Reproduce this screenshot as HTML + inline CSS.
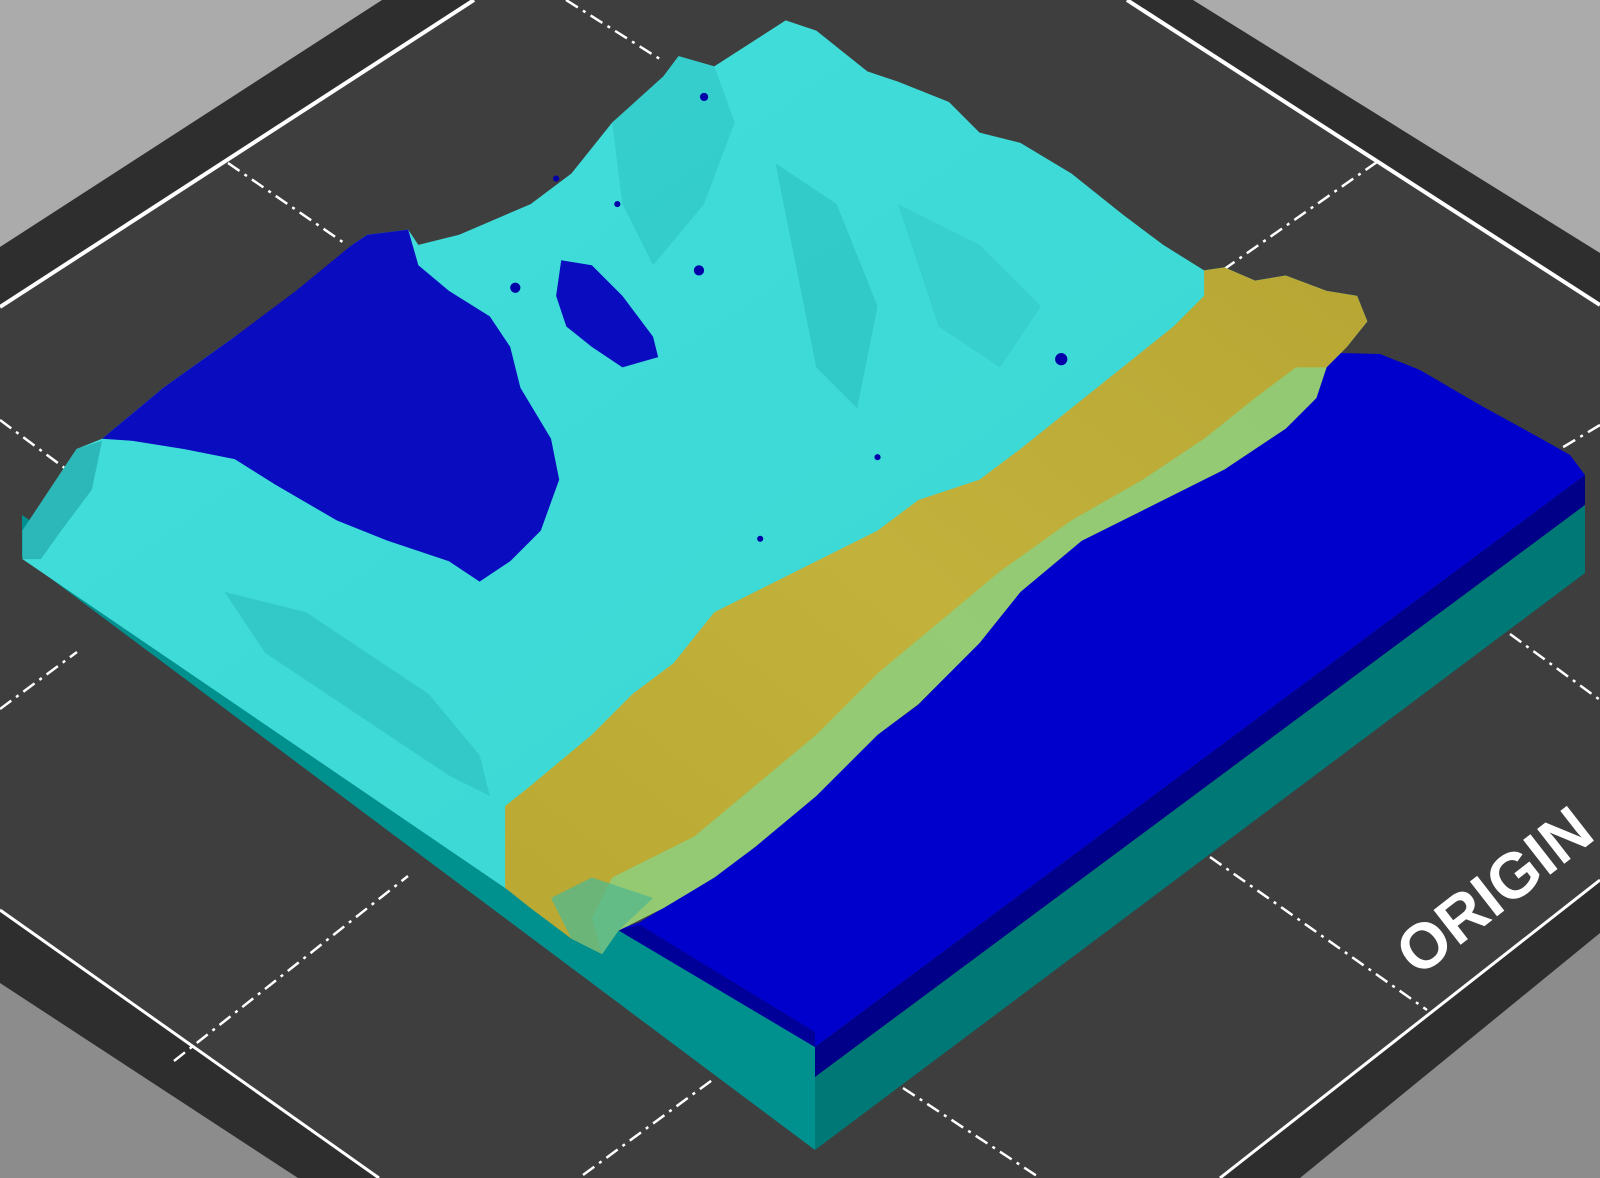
<!DOCTYPE html>
<html><head><meta charset="utf-8"><style>html,body{margin:0;padding:0;background:#3e3e3e;overflow:hidden}svg{display:block}</style></head>
<body>
<svg width="1600" height="1178" viewBox="0 0 1600 1178" xmlns="http://www.w3.org/2000/svg">
<defs>
<linearGradient id="yel" x1="0" y1="1" x2="1" y2="0">
<stop offset="0" stop-color="#b9a832"/><stop offset="0.5" stop-color="#c2b23c"/><stop offset="1" stop-color="#b8a634"/>
</linearGradient>
<linearGradient id="cy" x1="0" y1="0" x2="1" y2="1">
<stop offset="0" stop-color="#42dedc"/><stop offset="1" stop-color="#3ad6d2"/>
</linearGradient>
</defs>
<rect width="1600" height="1178" fill="#3e3e3e"/>
<polygon points="0,0 474,0 0,307" fill="#2e2e2e"/>
<polygon points="0,0 382,0 0,247" fill="#ababab"/>
<line x1="474" y1="0" x2="0" y2="307" stroke="#fff" stroke-width="4"/>
<polygon points="1127,0 1600,0 1600,305" fill="#2e2e2e"/>
<polygon points="1193,0 1600,0 1600,253" fill="#ababab"/>
<line x1="1127" y1="0" x2="1600" y2="305" stroke="#fff" stroke-width="4"/>
<polygon points="1220,1178 1600,880 1600,1178" fill="#2e2e2e"/>
<polygon points="1300,1178 1600,933 1600,1178" fill="#8c8c8c"/>
<line x1="1220" y1="1178" x2="1600" y2="880" stroke="#fff" stroke-width="3"/>
<polygon points="0,910 379,1178 0,1178" fill="#2e2e2e"/>
<polygon points="0,983 298,1178 0,1178" fill="#8c8c8c"/>
<line x1="0" y1="910" x2="379" y2="1178" stroke="#fff" stroke-width="3"/>
<g stroke="#fff" stroke-width="2.5" stroke-dasharray="14 6 3 6" fill="none">
<line x1="566" y1="0" x2="663" y2="61"/>
<line x1="228" y1="163" x2="347" y2="245"/>
<line x1="0" y1="420" x2="70" y2="472"/>
<line x1="1377" y1="162" x2="1213" y2="277"/>
<line x1="1600" y1="425" x2="1555" y2="452"/>
<line x1="1510" y1="634" x2="1600" y2="700"/>
<line x1="1210" y1="857" x2="1427" y2="1010"/>
<line x1="0" y1="709" x2="77" y2="652"/>
<line x1="174" y1="1061" x2="408" y2="876"/>
<line x1="583" y1="1175" x2="715" y2="1078"/>
<line x1="903" y1="1088" x2="1040" y2="1178"/>
</g>
<text x="0" y="0" transform="translate(1418,978) rotate(-38)" font-family="Liberation Sans, sans-serif" font-weight="bold" font-size="64" fill="#fff">ORIGIN</text>
<polygon points="22,515 618,918 815,1047 815,1150 22,557" fill="#00908e"/>
<polygon points="815,1047 1585,475 1585,505 815,1077" fill="#000088"/>
<polygon points="815,1077 1585,505 1585,573 815,1150" fill="#007876"/>
<polygon points="618,930 815,1047 1585,475 1570,455 1540,438 1480,405 1420,370 1380,354 1340,353 1320,368 1300,400 1270,430 1220,465 1140,510 1080,540 1020,592 980,642 918,705 877,735 815,795 755,847 714,877 663,908 640,922" fill="#0000cc"/>
<polygon points="640,925 815,1032 815,1047 618,930" fill="#000099"/>
<g transform="scale(1.0204)">
<polygon points="22,520 75,440 100,430 160,380 230,330 290,290 345,240 360,230 400,225 410,240 450,230 520,200 560,170 600,120 650,75 665,55 700,65 770,20 800,30 850,70 880,80 930,100 960,130 1000,140 1050,170 1100,210 1140,240 1180,265 1200,262 1230,275 1260,270 1300,285 1330,290 1340,315 1320,340 1300,360 1290,390 1260,420 1200,460 1120,500 1060,530 1000,580 960,630 900,690 860,720 800,780 740,830 700,860 650,890 606,912 590,935 22,548" fill="url(#cy)"/>
<polygon points="22,520 75,440 100,432 90,480 60,520 40,548 22,548" fill="#2cb8b8"/>
<polygon points="220,580 300,600 360,640 420,680 470,740 480,780 440,760 380,720 320,680 260,640" fill="#30c4c4" opacity="0.8"/>
<polygon points="600,120 650,75 665,55 700,65 720,120 690,200 640,260 610,200" fill="#30c8c8" opacity="0.7"/>
<polygon points="760,160 820,200 860,300 840,400 800,360 780,260" fill="#2cc0c0" opacity="0.6"/>
<polygon points="880,200 960,240 1020,300 980,360 920,320" fill="#32c6c6" opacity="0.5"/>
<polygon points="1180,265 1200,262 1230,275 1260,270 1300,285 1330,290 1340,315 1320,340 1300,360 1290,390 1260,420 1200,460 1120,500 1060,530 1000,580 960,630 900,690 860,720 800,780 740,830 700,860 650,890 606,912 590,935 560,920 520,890 495,870 495,790 520,770 580,720 620,680 660,650 700,600 760,570 820,540 860,520 900,490 960,470 1000,440 1050,400 1100,360 1150,320 1180,290" fill="url(#yel)"/>
<polygon points="1300,360 1290,390 1260,420 1200,460 1120,500 1060,530 1000,580 960,630 900,690 860,720 800,780 740,830 700,860 650,890 606,912 590,935 580,900 600,860 680,820 740,770 800,720 860,660 920,610 980,560 1050,510 1120,470 1180,430 1230,390 1270,360" fill="#8ccf7e" opacity="0.85"/>
<polygon points="606,912 590,935 560,920 540,880 580,860 640,880" fill="#58b88a" opacity="0.8"/>
<polygon points="100,430 160,380 230,330 290,285 345,240 360,230 400,225 410,260 440,285 480,310 500,340 510,380 540,430 548,470 530,520 500,550 470,570 440,550 380,530 330,510 270,475 230,450 180,440 130,432" fill="#0a0cc0"/>
<polygon points="550,255 580,260 610,290 640,330 645,350 610,360 580,340 555,320 545,290" fill="#0a0cc0"/>
<g fill="#0000a8">
<circle cx="690" cy="95" r="4"/><circle cx="545" cy="175" r="3"/><circle cx="605" cy="200" r="3"/>
<circle cx="685" cy="265" r="5"/><circle cx="1040" cy="352" r="6"/><circle cx="860" cy="448" r="3"/><circle cx="745" cy="528" r="3"/>
<circle cx="505" cy="282" r="5"/>
</g>
</g>
</svg>
</body></html>
